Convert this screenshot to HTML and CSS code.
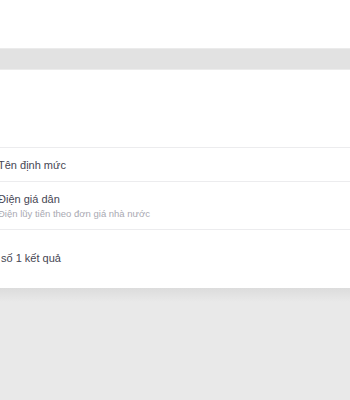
FILE: index.html
```html
<!DOCTYPE html>
<html lang="vi">
<head>
    <meta charset="UTF-8">
    <meta name="viewport" content="width=device-width, initial-scale=1.0">
    <title>Định mức</title>
    <link rel="stylesheet" href="styles.css">
</head>
<body>
    <div class="top-bar"></div>
    <div class="gap-band"></div>

    <div class="sheet">
        <div class="sheet-head"></div>
        <ul class="rate-list">
            <li class="rate-item">
                <div class="rate-title">Tên định mức</div>
            </li>
            <li class="rate-item rate-item-tall">
                <div class="rate-title">Điện giá dân</div>
                <div class="rate-sub">Điện lũy tiến theo đơn giá nhà nước</div>
            </li>
        </ul>
        <div class="result-count">số 1 kết quả</div>
    </div>

    <div class="backdrop"></div>
</body>
</html>
```

FILE: styles.css
```css
* {
    margin: 0;
    padding: 0;
    box-sizing: border-box;
    font-family: 'Liberation Sans', Arial, sans-serif;
}

body {
    background-color: #e9e9e9;
    width: 350px;
    height: 400px;
    overflow: hidden;
}

.top-bar {
    height: 48px;
    background-color: white;
}

.gap-band {
    height: 22px;
    background-color: #e2e2e2;
    border-top: 1px solid #ebebeb;
    border-bottom: 1px solid #ececec;
}

.sheet {
    background-color: white;
    height: 218px;
    display: flex;
    flex-direction: column;
}

.sheet-head {
    height: 78px;
    border-bottom: 1px solid #ececee;
}

.rate-list {
    list-style: none;
    margin-left: -2px;
}

.rate-item {
    height: 34px;
    display: flex;
    flex-direction: column;
    justify-content: center;
    border-bottom: 1px solid #ececee;
}

.rate-item-tall {
    height: 48px;
    gap: 3px;
}

.rate-title {
    font-size: 11px;
    color: #464653;
}

.rate-sub {
    font-size: 9.5px;
    color: #a9a9b2;
}

.result-count {
    flex: 1;
    display: flex;
    align-items: center;
    padding-bottom: 2px;
    padding-left: 1px;
    font-size: 11px;
    color: #464653;
}

.backdrop {
    height: 112px;
    background: linear-gradient(#dcdcdc, #e9e9e9 14px);
}
```
